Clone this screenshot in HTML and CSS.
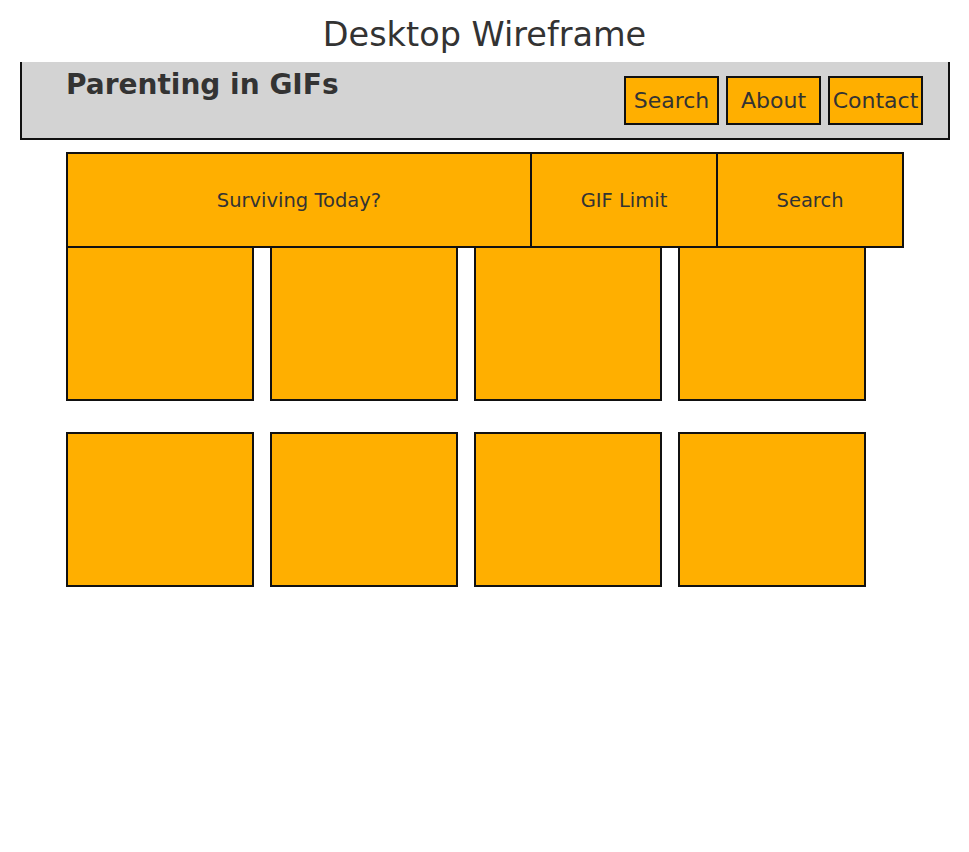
FILE: index.html
```html
<!DOCTYPE html>
<html lang="en">
<head>
    <meta charset="UTF-8">
    <title>Desktop Wireframe</title>
    <link rel="stylesheet" href="styles.css">
</head>
<body>
<h1 class="page-title">Desktop Wireframe</h1>

<div class="topbar">
    <h2 class="site-name">Parenting in GIFs</h2>
    <div class="topnav">
        <div class="topnav-btn">Search</div>
        <div class="topnav-btn">About</div>
        <div class="topnav-btn">Contact</div>
    </div>
</div>

<div class="menu">
    <div class="menu-item menu-wide">Surviving Today?</div>
    <div class="menu-item">GIF Limit</div>
    <div class="menu-item">Search</div>
</div>

<div class="gifs">
    <div class="gif"></div>
    <div class="gif"></div>
    <div class="gif"></div>
    <div class="gif"></div>
    <div class="gif"></div>
    <div class="gif"></div>
    <div class="gif"></div>
    <div class="gif"></div>
</div>
</body>
</html>
```

FILE: styles.css
```css
* {
    box-sizing: border-box;
}
body {
    margin: 0;
    font-family: "DejaVu Sans", sans-serif;
    color: #333333;
    background: #ffffff;
}
.page-title {
    margin: 0;
    padding-top: 15px;
    height: 62px;
    font-size: 33.5px;
    line-height: 40px;
    font-weight: normal;
    text-align: center;
}
.topbar {
    width: 930px;
    height: 78px;
    margin-left: 20px;
    padding: 0 25px 0 44px;
    background: #d3d3d3;
    border: solid 2px #111111;
    border-top: none;
    display: flex;
    justify-content: space-between;
    align-items: flex-start;
}
.site-name {
    margin: 6px 0 0 0;
    font-size: 28px;
    line-height: 34px;
    font-weight: bold;
}
.topnav {
    margin-top: 14px;
    display: flex;
    gap: 7px;
}
.topnav-btn {
    width: 95px;
    height: 49px;
    background: #ffaf00;
    border: solid 2px #111111;
    font-size: 22px;
    line-height: 1;
    display: flex;
    align-items: center;
    justify-content: center;
    white-space: nowrap;
}
.menu {
    margin: 12px 0 0 66px;
    display: flex;
}
.menu-item {
    width: 188px;
    height: 96px;
    margin-left: -2px;
    background: #ffaf00;
    border: solid 2px #111111;
    font-size: 19.5px;
    display: flex;
    align-items: center;
    justify-content: center;
}
.menu-item:first-child {
    margin-left: 0;
}
.menu-wide {
    width: 466px;
}
.gifs {
    margin: -2px 0 0 66px;
    display: grid;
    grid-template-columns: repeat(4, 188px);
    column-gap: 16px;
    row-gap: 31px;
}
.gif {
    height: 155px;
    background: #ffaf00;
    border: solid 2px #111111;
}
```
